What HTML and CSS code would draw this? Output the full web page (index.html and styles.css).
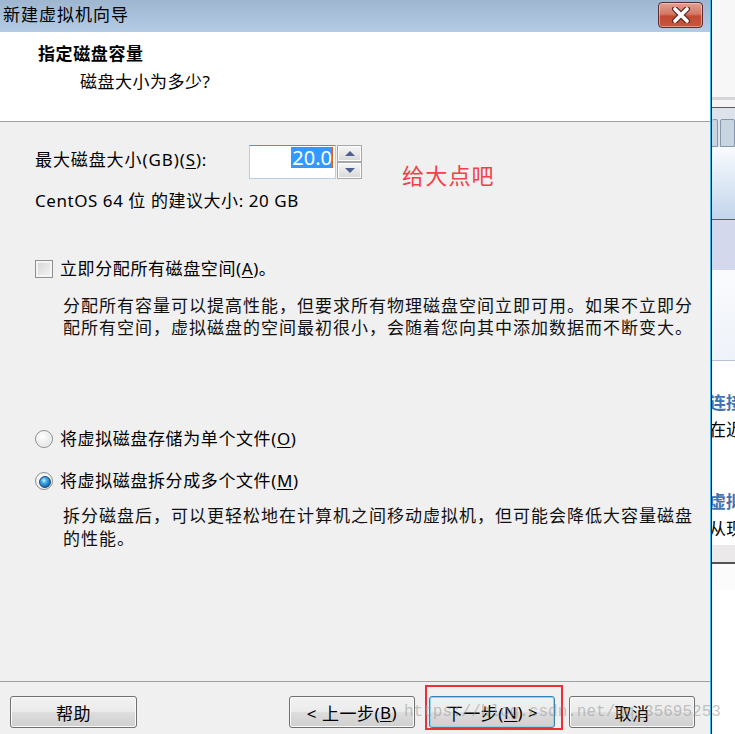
FILE: index.html
```html
<!DOCTYPE html>
<html lang="zh-CN">
<head>
<meta charset="utf-8">
<title>新建虚拟机向导</title>
<link rel="stylesheet" href="styles.css">
</head>
<body>
<div class="screen">
  <div class="dialog">
    <div class="titlebar">
      <span class="title">新建虚拟机向导</span>
      <div class="close">
        <svg width="22" height="16" viewBox="0 0 22 16">
          <path d="M5 2 L17 14 M17 2 L5 14" stroke="#5a2a24" stroke-width="6" stroke-linecap="round" fill="none"/>
          <path d="M5 2 L17 14 M17 2 L5 14" stroke="#ffffff" stroke-width="3.6" stroke-linecap="round" fill="none"/>
        </svg>
      </div>
    </div>
    <div class="header">
      <div class="h-title">指定磁盘容量</div>
      <div class="h-sub">磁盘大小为多少?</div>
    </div>
    <div class="content">
      <div class="size-row">
        <span class="size-label">最大磁盘大小(GB)(<u>S</u>):</span>
        <div class="spin">
          <div class="spin-edit"><span class="sel">20.0</span><span class="caret"></span></div>
          <div class="spin-btns">
            <div class="spin-btn"><span class="tri up"></span></div>
            <div class="spin-btn"><span class="tri down"></span></div>
          </div>
        </div>
        <span class="note">给大点吧</span>
      </div>
      <div class="rec">CentOS 64 位 的建议大小: 20 GB</div>
      <div class="opt check-row"><span class="checkbox"></span><span>立即分配所有磁盘空间(<u>A</u>)。</span></div>
      <p class="desc desc1">分配所有容量可以提高性能，但要求所有物理磁盘空间立即可用。如果不立即分<br>配所有空间，虚拟磁盘的空间最初很小，会随着您向其中添加数据而不断变大。</p>
      <div class="opt radio-row r1"><span class="radio"></span><span>将虚拟磁盘存储为单个文件(<u>O</u>)</span></div>
      <div class="opt radio-row r2"><span class="radio on"></span><span>将虚拟磁盘拆分成多个文件(<u>M</u>)</span></div>
      <p class="desc desc2">拆分磁盘后，可以更轻松地在计算机之间移动虚拟机，但可能会降低大容量磁盘<br>的性能。</p>
    </div>
    <div class="footer">
      <div class="btn help">帮助</div>
      <div class="btn-group">
        <div class="btn">&lt; 上一步(<u>B</u>)</div>
        <div class="btn next">下一步(<u>N</u>) &gt;</div>
        <div class="btn">取消</div>
      </div>
    </div>
  </div>
  <div class="edge"></div>
  <div class="app">
    <div class="app-top"></div>
    <div class="app-band"></div>
    <div class="app-white"></div>
    <div class="app-tabs"><span class="tab t1"></span><span class="tab t2"></span></div>
    <div class="app-grad"></div>
    <div class="app-lav"></div>
    <div class="app-pane"></div>
    <div class="app-list">
      <div class="a-head first">连接</div>
      <div class="a-text">在近</div>
      <div class="a-head second">虚拟</div>
      <div class="a-text">从现</div>
    </div>
    <div class="app-gray"></div>
    <div class="app-bottom"></div>
  </div>
  <div class="watermark">https://blog.csdn.net/qq_35695253</div>
</div>
</body>
</html>
```
FILE: styles.css
```css
* { box-sizing: border-box; }
html, body { margin: 0; padding: 0; }
body {
  width: 735px;
  height: 734px;
  overflow: hidden;
  font-family: "Noto Sans", "Noto Sans CJK SC", sans-serif;
  color: #000;
}
u { text-decoration: underline; text-underline-offset: 2px; }

.screen {
  position: relative;
  display: flex;
  width: 735px;
  height: 734px;
}

/* ---------- dialog ---------- */
.dialog {
  width: 710px;
  height: 734px;
  display: flex;
  flex-direction: column;
  background: #f0f0f0;
}
.titlebar {
  height: 32px;
  display: flex;
  justify-content: space-between;
  align-items: flex-start;
  background: linear-gradient(#9fb6d1, #b3cbe5);
}
.title {
  margin: 4px 0 0 3px;
  font-size: 17px;
  line-height: 22px;
  letter-spacing: 1px;
}
.close {
  margin: 2px 7px 0 0;
  width: 45px;
  height: 26px;
  border: 1px solid #5c2b2b;
  border-radius: 4px;
  background: linear-gradient(#e0a092 0%, #d57a66 45%, #c24a34 55%, #c8563e 100%);
  box-shadow: inset 0 0 0 1px rgba(255, 220, 210, 0.5);
  display: flex;
  align-items: center;
  justify-content: center;
}

.header {
  height: 90px;
  background: #fff;
  border-bottom: 1px solid #a0a0a0;
  padding: 11px 0 0 38px;
}
.h-title {
  font-size: 17px;
  font-weight: 700;
  line-height: 22px;
  letter-spacing: 0.6px;
}
.h-sub {
  margin: 6px 0 0 42px;
  font-size: 17px;
  line-height: 22px;
  letter-spacing: 0.5px;
}

.content {
  flex: 1;
  padding-left: 35px;
  font-size: 17px;
}
.size-row {
  margin-top: 23px;
  height: 34px;
  display: flex;
  align-items: flex-start;
}
.size-label {
  margin-top: 5px;
  width: 214px;
  line-height: 20px;
  font-size: 17px;
  letter-spacing: 0.9px;
  white-space: nowrap;
}
.spin { display: flex; }
.spin-edit {
  width: 87px;
  height: 34px;
  background: #fff;
  border: 1px solid #b7cfe6;
  border-top-color: #5f8fba;
  display: flex;
  justify-content: flex-end;
  align-items: flex-start;
  padding: 1px 2px 0 0;
}
.sel {
  background: #3399ff;
  color: #fff;
  font-size: 20px;
  line-height: 21px;
  padding: 0 0 0 1px;
}
.caret {
  width: 1px;
  height: 21px;
  background: #e05a10;
}
.spin-btns {
  margin-left: 1px;
  display: flex;
  flex-direction: column;
}
.spin-btn {
  width: 25px;
  height: 17px;
  border: 1px solid #a8a8a8;
  background: linear-gradient(#f6f6f6, #e8e8e8 50%, #d6d6d6);
  box-shadow: inset 0 0 0 1px #fbfbfb;
  display: flex;
  align-items: center;
  justify-content: center;
}
.tri { width: 0; height: 0; border-left: 5px solid transparent; border-right: 5px solid transparent; }
.tri.up { border-bottom: 5px solid #4e5f94; }
.tri.down { border-top: 5px solid #4e5f94; }
.note {
  margin: 17px 0 0 40px;
  font-size: 22px;
  line-height: 26px;
  letter-spacing: 1.2px;
  color: #f2404a;
  white-space: nowrap;
}

.rec {
  margin-top: 12px;
  line-height: 20px;
  font-size: 17px;
  letter-spacing: 0.55px;
}
.opt {
  display: flex;
  align-items: center;
  gap: 7px;
  line-height: 22px;
  letter-spacing: 0.6px;
}
.check-row { margin-top: 47px; }
.checkbox {
  width: 18px;
  height: 18px;
  border: 1px solid #8e8f8f;
  background: linear-gradient(135deg, #d4d4d4, #f6f6f6);
  box-shadow: inset 0 0 0 2px #f4f4f4;
}
.desc {
  margin: 15px 0 0 28px;
  line-height: 22px;
  letter-spacing: 1px;
  white-space: nowrap;
  color: #111;
}
.desc2 { margin-top: 12px; line-height: 23px; }
.r1 { margin-top: 89px; }
.r2 { margin-top: 20px; }
.radio {
  position: relative;
  width: 18px;
  height: 18px;
  border-radius: 50%;
  border: 1px solid #8e8f8f;
  background: radial-gradient(circle at 40% 35%, #ffffff 0%, #ececec 55%, #cfcfcf 100%);
  box-shadow: inset 0 0 0 1px #f6f6f6;
}
.radio.on::after {
  content: "";
  position: absolute;
  left: 3px;
  top: 3px;
  width: 10px;
  height: 10px;
  border-radius: 50%;
  border: 1px solid #1b4a78;
  background: radial-gradient(circle at 40% 35%, #c0f0ff 0%, #3aa6e6 35%, #0b5590 85%);
}

.footer {
  height: 53px;
  border-top: 1px solid #a0a0a0;
  padding: 14px 15px 0 10px;
  display: flex;
  justify-content: space-between;
  align-items: flex-start;
}
.btn-group { display: flex; gap: 14px; }
.btn {
  position: relative;
  width: 126px;
  height: 32px;
  border: 1px solid #707070;
  border-radius: 3px;
  background: linear-gradient(#f2f2f2 0%, #ebebeb 48%, #dddddd 52%, #cfcfcf 100%);
  box-shadow: inset 0 0 0 1px #fbfbfb;
  display: flex;
  align-items: center;
  justify-content: center;
  font-size: 17px;
  letter-spacing: 0.5px;
}
.btn.help { width: 127px; }
.btn.next {
  border-color: #3c7fb1;
  box-shadow: inset 0 0 0 1px #8fd3f2;
}
.btn.next::after {
  content: "";
  position: absolute;
  left: -5px;
  right: -9px;
  top: -12px;
  bottom: -3px;
  border: 2px solid #ec3038;
}

/* ---------- edge & background app ---------- */
.edge {
  width: 2px;
  height: 734px;
  border-left: 1px solid #2fb8ee;
  background: #111;
}
.app {
  flex: 1;
  height: 734px;
  overflow: hidden;
  background: #fff;
  display: flex;
  flex-direction: column;
}
.app-top { height: 97px; background: #f7f7f7; }
.app-band { height: 3px; background: #d6d6d6; }
.app-white { height: 7px; background: #f4f4f4; }
.app-tabs {
  height: 40px;
  border-top: 1px solid #5a5a5a;
  background: #dde3ea;
  display: flex;
  gap: 2px;
  padding: 11px 0 0 0;
}
.tab {
  height: 28px;
  background: #c8d4e0;
  border: 1px solid #8796ab;
  border-radius: 2px 2px 0 0;
}
.tab.t1 { width: 6px; border-left: none; }
.tab.t2 { flex: 1; }
.app-grad { height: 72px; background: linear-gradient(#f9fbfe, #c2d5eb); }
.app-lav { height: 51px; border-top: 1px solid #5e5e5e; background: #d4d8ec; }
.app-pane { height: 91px; background: linear-gradient(#fafbfd, #eef2f9); border-bottom: 1px solid #b8c2d6; }
.app-list {
  height: 184px;
  background: #fff;
  padding-top: 32px;
  white-space: nowrap;
}
.a-head {
  margin-left: -3px;
  font-size: 17px;
  font-weight: 700;
  line-height: 20px;
  color: #3f73b3;
}
.a-head.second { margin-top: 52px; }
.a-text {
  margin: 7px 0 0 -3px;
  font-size: 17px;
  line-height: 20px;
}
.app-gray { height: 19px; background: #ebe9e9; border-bottom: 2px solid #555; }
.app-bottom { flex: 1; background: #fff; border-top: 26px solid #fbfbfb; }

.watermark {
  position: absolute;
  left: 404px;
  top: 701px;
  font-family: "Liberation Mono", monospace;
  font-size: 16px;
  line-height: 22px;
  color: rgba(150, 150, 150, 0.55);
  white-space: nowrap;
  pointer-events: none;
}
```
